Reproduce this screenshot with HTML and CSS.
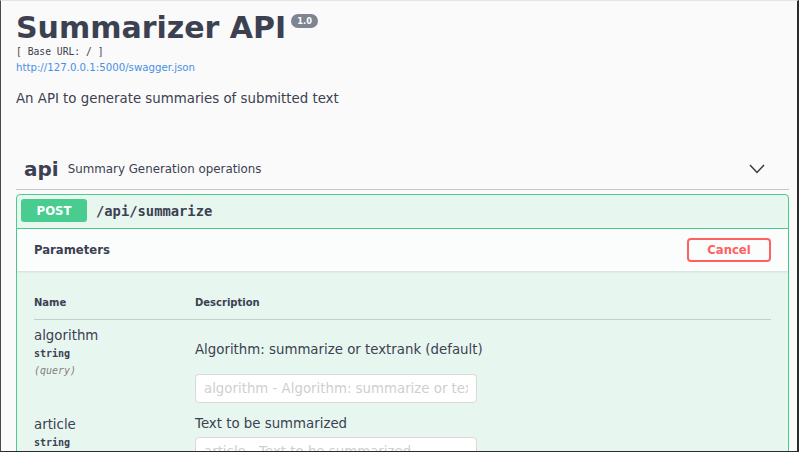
FILE: index.html
```html
<!DOCTYPE html>
<html lang="en">
<head>
<meta charset="utf-8">
<title>Summarizer API</title>
<link rel="stylesheet" href="styles.css">
</head>
<body>
<div class="frame">
  <div class="wrapper">
    <div class="info">
      <h2 class="title">Summarizer API<span class="version">1.0</span></h2>
      <pre class="base-url">[ Base URL: / ]</pre>
      <a class="spec-link" href="#">http://127.0.0.1:5000/swagger.json</a>
      <p class="info-desc">An API to generate summaries of submitted text</p>
    </div>

    <div class="tag">
      <span class="tag-name">api</span>
      <span class="tag-desc">Summary Generation operations</span>
      <svg class="chevron" width="16" height="10" viewBox="0 0 16 10"><polyline points="1,1 8,8.5 15,1" fill="none" stroke="#3b3b3b" stroke-width="1.5"/></svg>
    </div>

    <div class="opblock">
      <div class="op-summary">
        <span class="method">POST</span>
        <span class="op-path">/api/summarize</span>
      </div>
      <div class="section-header">
        <h4 class="section-title">Parameters</h4>
        <button class="btn-cancel">Cancel</button>
      </div>
      <div class="table-container">
        <div class="params-head">
          <div class="col-name">Name</div>
          <div class="col-desc">Description</div>
        </div>
        <div class="param-row">
          <div class="col-name">
            <div class="param-name">algorithm</div>
            <div class="param-type">string</div>
            <div class="param-in">(query)</div>
          </div>
          <div class="col-desc">
            <p class="param-desc param-desc-md">Algorithm: summarize or textrank (default)</p>
            <input class="param-input" type="text" placeholder="algorithm - Algorithm: summarize or textrank (default)">
          </div>
        </div>
        <div class="param-row">
          <div class="col-name">
            <div class="param-name">article</div>
            <div class="param-type">string</div>
          </div>
          <div class="col-desc">
            <p class="param-desc">Text to be summarized</p>
            <input class="param-input" type="text" placeholder="article - Text to be summarized">
          </div>
        </div>
      </div>
    </div>
  </div>
</div>
</body>
</html>
```

FILE: styles.css
```css
* { box-sizing: border-box; }

html, body {
  margin: 0;
  padding: 0;
  background: #ffffff;
}

body {
  font-family: "DejaVu Sans", "Open Sans", sans-serif;
  color: #3b4151;
}

.frame {
  width: 799px;
  height: 452px;
  overflow: hidden;
  background: #fafafa;
  border-top: 1px solid #e4e4e4;
  border-left: 1px solid #4a4a4a;
  border-right: 2px solid #2b2b2b;
  border-bottom: 1px solid #2b2b2b;
}

.wrapper {
  padding: 9px 0 0 15px;
  width: 788px;
}

.title {
  margin: 0;
  font-size: 30px;
  line-height: 36px;
  font-weight: bold;
  color: #3b4151;
  white-space: nowrap;
}

.version {
  display: inline-block;
  vertical-align: top;
  margin: 4px 0 0 5px;
  padding: 2px 6px;
  border-radius: 8px;
  background: #7d8492;
  color: #fff;
  font-size: 8.3px;
  line-height: 10px;
  font-weight: bold;
}

.base-url {
  margin: 0;
  font-family: "DejaVu Sans Mono", monospace;
  font-size: 9.7px;
  line-height: 12px;
  color: #3b4151;
}

.spec-link {
  display: block;
  margin-top: 4px;
  font-size: 10.2px;
  line-height: 12px;
  color: #4990e2;
  text-decoration: none;
}

.info-desc {
  margin: 17px 0 0;
  font-size: 13.33px;
  line-height: 16px;
  color: #3b4151;
}

.tag {
  display: flex;
  align-items: center;
  height: 42px;
  margin-top: 41px;
  padding-left: 8px;
  border-bottom: 1px solid #c4c6cb;
}

.tag-name {
  font-size: 20px;
  line-height: 24px;
  font-weight: bold;
}

.tag-desc {
  margin-left: 9px;
  font-size: 11.85px;
  line-height: 16px;
}

.chevron {
  margin-left: auto;
  margin-right: 24px;
}

.opblock {
  margin-top: 4px;
  border: 1px solid #49cc90;
  border-radius: 4px;
  background: #e8f6f0;
  height: 300px;
}

.op-summary {
  display: flex;
  align-items: center;
  padding: 4px 4px 6px;
  border-bottom: 1px solid #49cc90;
}

.method {
  display: flex;
  align-items: center;
  justify-content: center;
  width: 66px;
  height: 23px;
  border-radius: 3px;
  background: #49cc90;
  color: #fff;
  font-size: 11.67px;
  font-weight: bold;
}

.op-path {
  margin-left: 9px;
  font-family: "DejaVu Sans Mono", monospace;
  font-weight: bold;
  font-size: 13.8px;
  color: #3b4151;
}

.section-header {
  display: flex;
  align-items: center;
  justify-content: space-between;
  height: 42px;
  padding: 0 17px 0 17px;
  background: rgba(255, 255, 255, 0.8);
  box-shadow: 0 1px 2px rgba(0, 0, 0, 0.1);
}

.section-title {
  margin: 0;
  font-size: 11.67px;
  font-weight: bold;
}

.btn-cancel {
  width: 84px;
  height: 24px;
  padding: 0;
  border: 2px solid #ff6060;
  border-radius: 4px;
  background: transparent;
  color: #ff6060;
  font-family: "DejaVu Sans", sans-serif;
  font-size: 11.67px;
  font-weight: bold;
}

.table-container {
  padding: 16px 17px 0 17px;
}

.params-head {
  display: grid;
  grid-template-columns: 161px 1fr;
  padding: 10px 0;
  border-bottom: 1px solid #c3cfcb;
  font-size: 10px;
  line-height: 12px;
  font-weight: bold;
}

.param-row {
  display: grid;
  grid-template-columns: 161px 1fr;
  padding: 7px 0 6px;
}

.param-name {
  margin-top: 1px;
  font-size: 13.33px;
  line-height: 16px;
}

.param-type {
  margin-top: 4px;
  font-family: "DejaVu Sans Mono", monospace;
  font-weight: bold;
  font-size: 10px;
  line-height: 12px;
}

.param-in {
  margin-top: 5px;
  font-family: "DejaVu Sans Mono", monospace;
  font-style: italic;
  font-size: 10px;
  line-height: 12px;
  color: #808080;
}

.param-desc {
  margin: 0 0 5px;
  font-size: 13.33px;
  line-height: 16px;
}

.param-desc-md {
  margin: 15px 0 16px;
}

.param-input {
  display: block;
  width: 282px;
  height: 29px;
  margin: 0;
  padding: 0 8px;
  border: 1px solid #d9d9d9;
  border-radius: 4px;
  background: #fff;
  font-family: "DejaVu Sans", sans-serif;
  font-size: 13.33px;
  color: #3b4151;
}

.param-input::placeholder {
  color: #cfcfcf;
}
```
